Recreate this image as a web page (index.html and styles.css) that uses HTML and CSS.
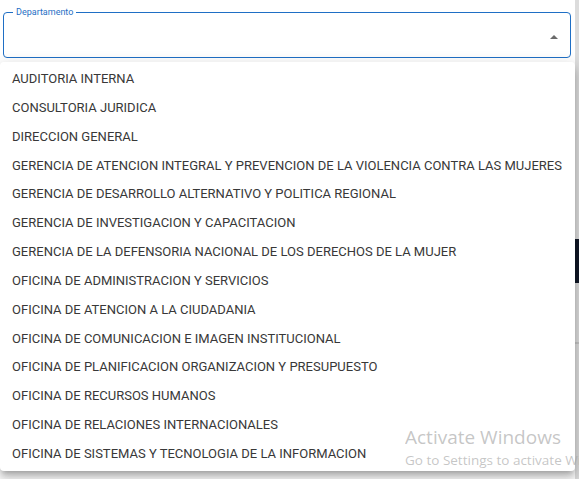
FILE: index.html
```html
<!DOCTYPE html>
<html lang="es">
<head>
<meta charset="utf-8">
<link rel="stylesheet" href="styles.css">
</head>
<body>
<div class="page">
  <div class="main">
    <fieldset class="field">
      <legend class="label">Departamento</legend>
      <div class="field-body">
        <span class="arrow"></span>
      </div>
    </fieldset>
  </div>
  <div class="side">
    <div class="side-gap1"></div>
    <div class="side-dark"></div>
    <div class="side-gap2"></div>
    <div class="side-line"></div>
  </div>
</div>
<ul class="menu">
  <li>AUDITORIA INTERNA</li>
  <li>CONSULTORIA JURIDICA</li>
  <li>DIRECCION GENERAL</li>
  <li>GERENCIA DE ATENCION INTEGRAL Y PREVENCION DE LA VIOLENCIA CONTRA LAS MUJERES</li>
  <li>GERENCIA DE DESARROLLO ALTERNATIVO Y POLITICA REGIONAL</li>
  <li>GERENCIA DE INVESTIGACION Y CAPACITACION</li>
  <li>GERENCIA DE LA DEFENSORIA NACIONAL DE LOS DERECHOS DE LA MUJER</li>
  <li>OFICINA DE ADMINISTRACION Y SERVICIOS</li>
  <li>OFICINA DE ATENCION A LA CIUDADANIA</li>
  <li>OFICINA DE COMUNICACION E IMAGEN INSTITUCIONAL</li>
  <li>OFICINA DE PLANIFICACION ORGANIZACION Y PRESUPUESTO</li>
  <li>OFICINA DE RECURSOS HUMANOS</li>
  <li>OFICINA DE RELACIONES INTERNACIONALES</li>
  <li>OFICINA DE SISTEMAS Y TECNOLOGIA DE LA INFORMACION</li>
</ul>
<div class="watermark">
  <div class="wm-title">Activate Windows</div>
  <div class="wm-sub">Go to Settings to activate Windows.</div>
</div>
</body>
</html>
```
FILE: styles.css
```css
html, body {
  margin: 0;
  padding: 0;
  background: #ffffff;
  width: 579px;
  height: 479px;
  overflow: hidden;
  font-family: Roboto, "Liberation Sans", sans-serif;
}
.page {
  display: flex;
  height: 479px;
}
.main {
  flex: 1;
  padding: 5px 0 0 3px;
}
.field {
  margin: 0;
  width: 568px;
  height: 53px;
  box-sizing: border-box;
  border: 1px solid #1f6fc5;
  border-radius: 4px;
  padding: 0 12px 0 9px;
}
.label {
  font-size: 9px;
  color: #1f6fc5;
  padding: 0 3px;
  line-height: 14px;
}
.field-body {
  display: flex;
  justify-content: flex-end;
  align-items: center;
  height: 38px;
}
.arrow {
  width: 0;
  height: 0;
  border-left: 4px solid transparent;
  border-right: 4px solid transparent;
  border-bottom: 4px solid #6b6b6b;
  margin-bottom: 2px;
}
.side {
  width: 4px;
  display: flex;
  flex-direction: column;
  background: #dcdcdc;
}
.side-gap1 { height: 239px; }
.side-dark { height: 44px; background: #111827; }
.side-gap2 { height: 59px; }
.side-line { height: 2px; background: #c4c4c4; }
.menu {
  position: absolute;
  left: 0;
  top: 62px;
  width: 575px;
  margin: 0;
  padding: 3px 0 2px;
  list-style: none;
  background: #ffffff;
  border-radius: 4px;
  box-shadow: 0 5px 5px -3px rgba(0,0,0,.2), 0 8px 10px 1px rgba(0,0,0,.14), 0 3px 14px 2px rgba(0,0,0,.12);
}
.menu li {
  height: 28.85px;
  line-height: 28.85px;
  padding: 0 12px;
  font-size: 13px;
  color: #383838;
  white-space: nowrap;
}
.watermark {
  position: absolute;
  left: 405px;
  top: 424px;
  width: 174px;
  overflow: hidden;
  color: rgba(160,160,160,.6);
  font-family: "Open Sans", "Noto Sans", sans-serif;
  white-space: nowrap;
  pointer-events: none;
}
.wm-title {
  font-size: 19px;
  line-height: 26px;
}
.wm-sub {
  font-size: 13.5px;
  line-height: 20px;
}
```
